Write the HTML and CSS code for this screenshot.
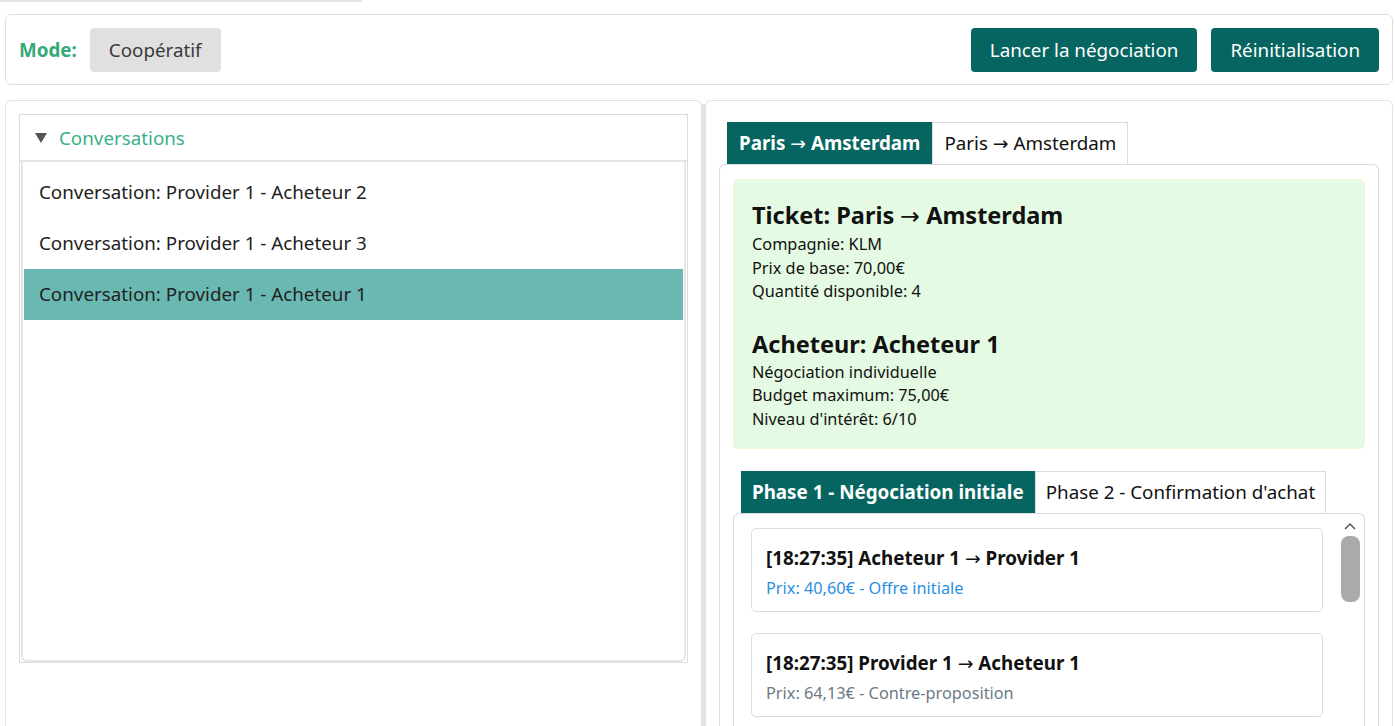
FILE: index.html
```html
<!DOCTYPE html>
<html lang="fr">
<head>
<meta charset="utf-8">
<title>Négociation</title>
<link rel="stylesheet" href="styles.css">
</head>
<body>
<div class="topline"></div>
<div class="page">
  <header class="toolbar">
    <div class="mode">
      <span class="mode-label">Mode:</span>
      <button class="btn btn-grey">Coopératif</button>
    </div>
    <div class="actions">
      <button class="btn btn-teal">Lancer la négociation</button>
      <button class="btn btn-teal">Réinitialisation</button>
    </div>
  </header>
  <main class="main">
    <section class="panel left">
      <div class="details">
        <div class="summary"><span class="tri"></span><span class="summary-text">Conversations</span></div>
        <ul class="conv-list">
          <li class="conv">Conversation: Provider 1 - Acheteur 2</li>
          <li class="conv">Conversation: Provider 1 - Acheteur 3</li>
          <li class="conv selected">Conversation: Provider 1 - Acheteur 1</li>
        </ul>
      </div>
    </section>
    <div class="splitter"></div>
    <section class="panel right">
      <div class="tabs route-tabs">
        <div class="tab active">Paris <span class="arr">→</span> Amsterdam</div>
        <div class="tab">Paris <span class="arr">→</span> Amsterdam</div>
      </div>
      <div class="tab-body">
        <div class="info">
          <h2 class="info-title">Ticket: Paris <span class="arr">→</span> Amsterdam</h2>
          <p class="info-line">Compagnie: KLM</p>
          <p class="info-line">Prix de base: 70,00€</p>
          <p class="info-line">Quantité disponible: 4</p>
          <h2 class="info-title second">Acheteur: Acheteur 1</h2>
          <p class="info-line">Négociation individuelle</p>
          <p class="info-line">Budget maximum: 75,00€</p>
          <p class="info-line">Niveau d'intérêt: 6/10</p>
        </div>
        <div class="tabs phase-tabs">
          <div class="tab active">Phase 1 - Négociation initiale</div>
          <div class="tab">Phase 2 - Confirmation d'achat</div>
        </div>
        <div class="phase-body">
          <div class="messages">
            <div class="msg">
              <div class="msg-title">[18:27:35] Acheteur 1 <span class="arr">→</span> Provider 1</div>
              <div class="msg-price blue">Prix: 40,60€ - Offre initiale</div>
            </div>
            <div class="msg">
              <div class="msg-title">[18:27:35] Provider 1 <span class="arr">→</span> Acheteur 1</div>
              <div class="msg-price grey">Prix: 64,13€ - Contre-proposition</div>
            </div>
          </div>
          <div class="scrollbar">
            <svg class="scroll-up" width="12" height="8" viewBox="0 0 12 8"><path d="M1 7 L6 2 L11 7" fill="none" stroke="#555" stroke-width="1.5"/></svg>
            <div class="thumb"></div>
          </div>
        </div>
      </div>
    </section>
  </main>
</div>
</body>
</html>
```
FILE: styles.css
```css
html, body {
  margin: 0;
  padding: 0;
  height: 726px;
  overflow: hidden;
  background: #ffffff;
}
body {
  font-family: "Noto Sans", "Open Sans", sans-serif;
  color: #222;
}
.arr {
  font-family: "DejaVu Sans", sans-serif;
  font-weight: 400;
}
.topline {
  width: 362px;
  height: 2px;
  background: #e4e4e4;
  margin-bottom: 12px;
}
.page {
  padding: 0 2px 0 5px;
}
.toolbar {
  height: 69px;
  border: 1px solid #e0e0e0;
  border-radius: 6px;
  padding: 0 13px;
  display: flex;
  align-items: center;
  justify-content: space-between;
}
.mode {
  display: flex;
  align-items: center;
  gap: 13px;
}
.mode-label {
  color: #33aa77;
  font-weight: 700;
  font-size: 18.8px;
}
.btn {
  font-family: inherit;
  font-size: 18.8px;
  height: 44px;
  border: none;
  border-radius: 4px;
  padding: 0 19px;
  cursor: pointer;
}
.btn-grey {
  background: #e0e0e0;
  color: #3a3a3a;
}
.btn-teal {
  background: #066560;
  color: #ffffff;
}
.actions {
  display: flex;
  gap: 14px;
}
.main {
  display: flex;
  margin-top: 15px;
  height: 640px;
}
.panel {
  border: 1px solid #e2e2e2;
  border-radius: 6px 6px 0 0;
  border-bottom: none;
  box-sizing: border-box;
  padding: 13px;
}
.left {
  width: 697px;
}
.splitter {
  width: 3px;
  background: #e2e2e2;
  margin-top: 4px;
}
.right {
  flex: 1;
  padding-top: 21px;
}
.details {
  border: 1px solid #dcdcdc;
  height: 549px;
  box-sizing: border-box;
  display: flex;
  flex-direction: column;
}
.summary {
  height: 45px;
  display: flex;
  align-items: center;
  padding-left: 15px;
  border-bottom: 2px solid #e4e4e4;
  gap: 12px;
}
.tri {
  width: 0;
  height: 0;
  border-left: 6px solid transparent;
  border-right: 6px solid transparent;
  border-top: 10px solid #555;
}
.summary-text {
  color: #3cb08a;
  font-size: 18.8px;
}
.conv-list {
  list-style: none;
  margin: 0 1px 0 1px;
  padding: 5px 1px 2px 1px;
  flex: 1;
  border: 2px solid #e6e6e6;
  border-top: none;
  border-radius: 0 0 6px 6px;
}
.conv {
  height: 51px;
  line-height: 51px;
  padding-left: 15px;
  font-size: 18.8px;
  color: #222;
}
.conv.selected {
  background: #6ab8b2;
}
.tabs {
  display: flex;
}
.route-tabs {
  margin-left: 8px;
}
.tab {
  height: 42px;
  line-height: 41px;
  box-sizing: border-box;
  padding: 0 11px;
  font-size: 18.8px;
  color: #111;
  border: 1px solid #dcdcdc;
  border-bottom: none;
  background: #fff;
  white-space: nowrap;
}
.tab.active {
  background: #066560;
  color: #fff;
  font-weight: 700;
  border-color: #066560;
}
.tab-body {
  border: 1px solid #dcdcdc;
  border-radius: 6px 6px 0 0;
  border-bottom: none;
  padding: 14px 13px 0 13px;
  height: 600px;
}
.info {
  background: #e4fae2;
  border: 1px solid #f0f5dc;
  border-radius: 5px;
  padding: 20px 18px 17px 18px;
}
.info-title {
  margin: 0 0 2px 0;
  font-size: 23.5px;
  font-weight: 700;
  color: #111;
  line-height: 30px;
}
.info-title.second {
  margin-top: 25px;
}
.info-line {
  margin: 0;
  font-size: 16.3px;
  line-height: 23.5px;
  color: #111;
}
.phase-tabs {
  margin: 22px 0 0 8px;
}
.phase-tabs .tab {
  padding: 0 10px;
}
.phase-body {
  border: 1px solid #dcdcdc;
  border-radius: 6px 6px 0 0;
  border-bottom: none;
  display: flex;
  padding: 14px 4px 0 17px;
  height: 240px;
}
.messages {
  flex: 1;
  display: flex;
  flex-direction: column;
  gap: 21px;
}
.msg {
  border: 1px solid #dcdcdc;
  border-radius: 5px;
  padding: 17px 14px 12px 14px;
  margin-right: 17px;
}
.msg-title {
  font-size: 18.8px;
  font-weight: 700;
  color: #111;
  line-height: 25px;
}
.msg-price {
  font-size: 16.3px;
  margin-top: 6px;
  line-height: 22px;
}
.msg-price.blue {
  color: #2b8fe0;
}
.msg-price.grey {
  color: #6b7a86;
}
.scrollbar {
  width: 20px;
  display: flex;
  flex-direction: column;
  align-items: center;
  margin-top: -6px;
}
.thumb {
  width: 19px;
  height: 66px;
  background: #aaaaaa;
  border-radius: 8px;
  margin-top: 6px;
}
```
